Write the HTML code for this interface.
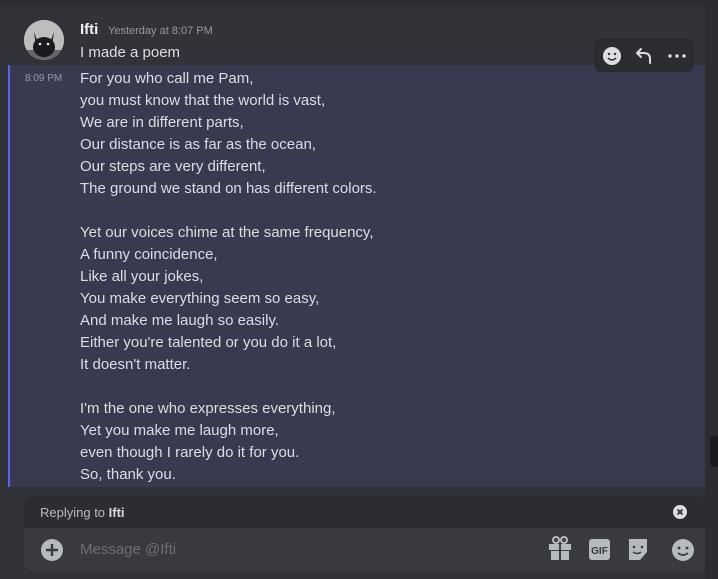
<!DOCTYPE html>
<html><head><style>
body{margin:0;width:718px;height:579px;overflow:hidden;background:#313338;font-family:"Liberation Sans",sans-serif;position:relative}
.top{position:absolute;left:0;top:0;width:718px;height:5px;background:#2b2d31}
.hl{position:absolute;left:8px;top:65px;width:697px;height:422px;background:#383a50;border-left:2px solid #5865f2;box-sizing:border-box}
.rc{position:absolute;left:705px;top:5px;width:13px;height:574px;background:#2b2d31}
.thumb{position:absolute;left:710px;top:436px;width:8px;height:31px;background:#1a1b1e;border-radius:4px 0 0 4px}
.av{position:absolute;left:24px;top:20px;width:40px;height:40px;border-radius:50%;background:#c9c9c9;overflow:hidden}
.name{position:absolute;left:80px;top:21px;color:#f2f3f5;font-weight:bold;font-size:15px}
.ts{position:absolute;left:108px;top:25px;color:#949ba4;font-size:11px}
.t1{position:absolute;left:80px;top:44px;color:#dbdee1;font-size:15px}
.side{position:absolute;left:25px;top:73px;color:#949ba4;font-size:10px}
.poem{position:absolute;left:80px;top:68px;color:#dbdee1;font-size:15px;line-height:22px;white-space:pre}
.tb{position:absolute;left:595px;top:39px;width:98px;height:33px;background:#2b2d31;border:1px solid #26272b;border-radius:6px;box-sizing:border-box}
.reply{position:absolute;left:24px;top:496px;width:681px;height:32px;background:#2b2d31;border-radius:8px 8px 0 0;color:#b5bac1;font-size:13px}
.inp{position:absolute;left:24px;top:528px;width:681px;height:43px;background:#383a40;border-radius:0 0 8px 8px}
</style></head><body>
<div class="top"></div>
<div class="rc"></div>
<div class="hl"></div>
<div class="thumb"></div>
<div class="av"><svg width="40" height="40"><rect width="40" height="40" fill="#bdbdbd"/><rect x="0" y="30" width="40" height="10" fill="#666"/><path d="M10 12 L13 20 L27 20 L30 12 L28 26 Q20 36 12 26 Z" fill="#1b1b1f"/><ellipse cx="20" cy="27" rx="11" ry="10" fill="#1b1b1f"/><circle cx="16" cy="24" r="1.3" fill="#eee"/><circle cx="24" cy="24" r="1.3" fill="#eee"/></svg></div>
<div class="name">Ifti</div>
<div class="ts">Yesterday at 8:07 PM</div>
<div class="t1">I made a poem</div>
<div class="side">8:09 PM</div>
<div class="poem">For you who call me Pam,
you must know that the world is vast,
We are in different parts,
Our distance is as far as the ocean,
Our steps are very different,
The ground we stand on has different colors.

Yet our voices chime at the same frequency,
A funny coincidence,
Like all your jokes,
You make everything seem so easy,
And make me laugh so easily.
Either you're talented or you do it a lot,
It doesn't matter.

I'm the one who expresses everything,
Yet you make me laugh more,
even though I rarely do it for you.
So, thank you.</div>
<div class="tb"><svg width="98" height="33" style="position:absolute;left:-1px;top:-1px">
<circle cx="17" cy="17" r="9" fill="#dbdee1"/><circle cx="14" cy="15" r="1.2" fill="#2b2d31"/><circle cx="20" cy="15" r="1.2" fill="#2b2d31"/><path d="M13 19 Q17 23 21 19" stroke="#2b2d31" stroke-width="1.5" fill="none"/>
<path d="M55 24 V20 Q55 14 49 14 H42 M46 10 L42 14 L46 18" stroke="#dbdee1" stroke-width="2" fill="none" stroke-linecap="round" stroke-linejoin="round"/>
<circle cx="75" cy="17" r="1.7" fill="#dbdee1"/><circle cx="82" cy="17" r="1.7" fill="#dbdee1"/><circle cx="89" cy="17" r="1.7" fill="#dbdee1"/></svg></div>
<div class="reply"><span style="position:absolute;left:16px;top:9px">Replying to <b style="color:#dbdee1">Ifti</b></span>
<svg width="16" height="16" style="position:absolute;left:648px;top:8px"><circle cx="8" cy="8" r="7" fill="#dbdee1"/><path d="M5.5 5.5 L10.5 10.5 M10.5 5.5 L5.5 10.5" stroke="#2b2d31" stroke-width="1.8"/></svg></div>
<div class="inp">
<svg width="24" height="24" style="position:absolute;left:16px;top:10px"><circle cx="12" cy="12" r="11" fill="#b5bac1"/><path d="M12 6 V18 M6 12 H18" stroke="#383a40" stroke-width="2.4"/></svg>
<span style="position:absolute;left:56px;top:13px;color:#6d6f78;font-size:15px">Message @Ifti</span>
<svg width="160" height="43" style="position:absolute;left:521px;top:0">
<rect x="4" y="16" width="22" height="6" fill="#b5bac1"/><rect x="6" y="23" width="18" height="9" fill="#b5bac1"/><rect x="14" y="16" width="2" height="16" fill="#383a40"/><circle cx="11" cy="12" r="3" fill="none" stroke="#b5bac1" stroke-width="2"/><circle cx="19" cy="12" r="3" fill="none" stroke="#b5bac1" stroke-width="2"/>
<rect x="44" y="11" width="21" height="21" rx="3" fill="#b5bac1"/><text x="54.5" y="26" font-size="10" font-weight="bold" fill="#383a40" text-anchor="middle" font-family="Liberation Sans">GIF</text>
<path d="M84 11 H102 V24 L95 32 H84 Z" fill="#b5bac1"/><circle cx="89" cy="19" r="1.3" fill="#383a40"/><circle cx="97" cy="19" r="1.3" fill="#383a40"/><path d="M88 24 Q92 27 96 24" stroke="#383a40" stroke-width="1.5" fill="none"/>
<circle cx="138" cy="22" r="11" fill="#b5bac1"/><circle cx="134" cy="20" r="1.4" fill="#383a40"/><circle cx="142" cy="20" r="1.4" fill="#383a40"/><path d="M133 25 Q138 29 143 25" stroke="#383a40" stroke-width="1.6" fill="none"/>
</svg></div>
</body></html>
